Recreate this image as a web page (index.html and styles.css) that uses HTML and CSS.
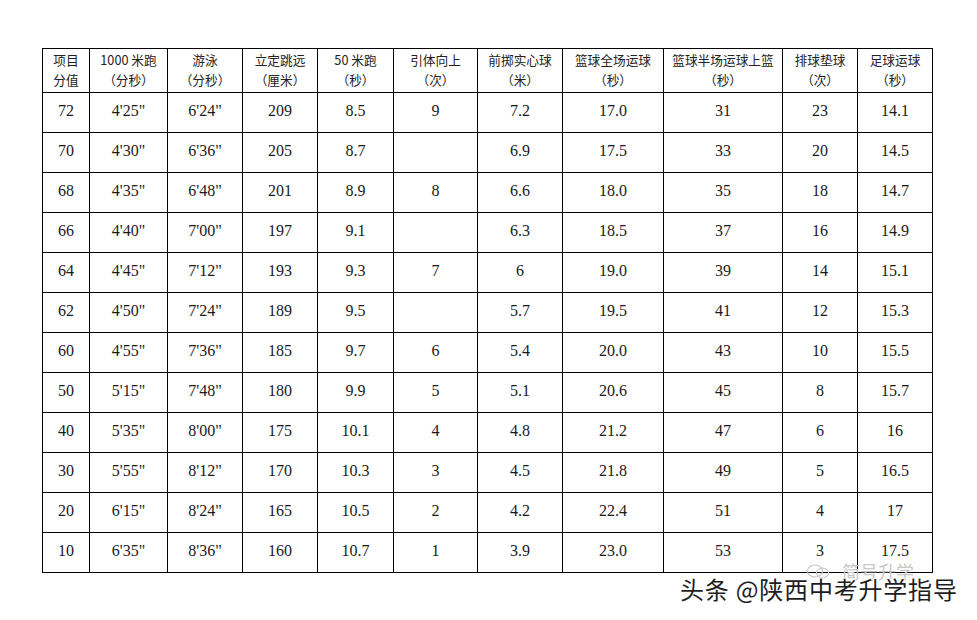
FILE: index.html
```html
<!DOCTYPE html>
<html lang="zh">
<head>
<meta charset="utf-8">
<link rel="stylesheet" href="styles.css">
</head>
<body>
<div class="page">
<table class="score">
<colgroup>
<col style="width:47px"><col style="width:78px"><col style="width:75px"><col style="width:75px"><col style="width:76px"><col style="width:84px"><col style="width:85px"><col style="width:101px"><col style="width:119px"><col style="width:75px"><col style="width:75px">
</colgroup>
<thead>
<tr>
<th>项目<br>分值</th>
<th>1000 米跑<br>（分秒）</th>
<th>游泳<br>（分秒）</th>
<th>立定跳远<br>（厘米）</th>
<th>50 米跑<br>（秒）</th>
<th>引体向上<br>（次）</th>
<th>前掷实心球<br>（米）</th>
<th>篮球全场运球<br>（秒）</th>
<th>篮球半场运球上篮<br>（秒）</th>
<th>排球垫球<br>（次）</th>
<th>足球运球<br>（秒）</th>
</tr>
</thead>
<tbody>
<tr><td>72</td><td>4'25"</td><td>6'24"</td><td>209</td><td>8.5</td><td>9</td><td>7.2</td><td>17.0</td><td>31</td><td>23</td><td>14.1</td></tr>
<tr><td>70</td><td>4'30"</td><td>6'36"</td><td>205</td><td>8.7</td><td></td><td>6.9</td><td>17.5</td><td>33</td><td>20</td><td>14.5</td></tr>
<tr><td>68</td><td>4'35"</td><td>6'48"</td><td>201</td><td>8.9</td><td>8</td><td>6.6</td><td>18.0</td><td>35</td><td>18</td><td>14.7</td></tr>
<tr><td>66</td><td>4'40"</td><td>7'00"</td><td>197</td><td>9.1</td><td></td><td>6.3</td><td>18.5</td><td>37</td><td>16</td><td>14.9</td></tr>
<tr><td>64</td><td>4'45"</td><td>7'12"</td><td>193</td><td>9.3</td><td>7</td><td>6</td><td>19.0</td><td>39</td><td>14</td><td>15.1</td></tr>
<tr><td>62</td><td>4'50"</td><td>7'24"</td><td>189</td><td>9.5</td><td></td><td>5.7</td><td>19.5</td><td>41</td><td>12</td><td>15.3</td></tr>
<tr><td>60</td><td>4'55"</td><td>7'36"</td><td>185</td><td>9.7</td><td>6</td><td>5.4</td><td>20.0</td><td>43</td><td>10</td><td>15.5</td></tr>
<tr><td>50</td><td>5'15"</td><td>7'48"</td><td>180</td><td>9.9</td><td>5</td><td>5.1</td><td>20.6</td><td>45</td><td>8</td><td>15.7</td></tr>
<tr><td>40</td><td>5'35"</td><td>8'00"</td><td>175</td><td>10.1</td><td>4</td><td>4.8</td><td>21.2</td><td>47</td><td>6</td><td>16</td></tr>
<tr><td>30</td><td>5'55"</td><td>8'12"</td><td>170</td><td>10.3</td><td>3</td><td>4.5</td><td>21.8</td><td>49</td><td>5</td><td>16.5</td></tr>
<tr><td>20</td><td>6'15"</td><td>8'24"</td><td>165</td><td>10.5</td><td>2</td><td>4.2</td><td>22.4</td><td>51</td><td>4</td><td>17</td></tr>
<tr><td>10</td><td>6'35"</td><td>8'36"</td><td>160</td><td>10.7</td><td>1</td><td>3.9</td><td>23.0</td><td>53</td><td>3</td><td>17.5</td></tr>
</tbody>
</table>
<div class="faint">
<svg class="faint-icon" width="24" height="16" viewBox="0 0 24 16"><ellipse cx="9" cy="8" rx="7.5" ry="6" fill="none" stroke="#c8c8c8" stroke-width="1.2"/><ellipse cx="16.5" cy="10" rx="6" ry="4.8" fill="none" stroke="#c8c8c8" stroke-width="1.2"/></svg>
<span>简号升学</span>
</div>
<div class="mark">头条 @陕西中考升学指导</div>
</div>
</body>
</html>
```
FILE: styles.css
```css
html, body {
  margin: 0;
  padding: 0;
  background: #ffffff;
}
.page {
  position: relative;
  width: 977px;
  height: 620px;
  padding: 48px 0 0 42px;
  box-sizing: border-box;
}
.score {
  border-collapse: collapse;
  table-layout: fixed;
  width: 891px;
  color: #1a1a1a;
}
.score th, .score td {
  border: 1px solid #000;
  padding: 0;
  text-align: center;
}
.score th {
  height: 42px;
  padding-bottom: 1px;
  font-family: "Noto Sans CJK SC", "Liberation Sans", sans-serif;
  font-weight: 400;
  font-size: 12.7px;
  line-height: 20px;
  color: #222;
  white-space: nowrap;
}
.score td {
  height: 40px;
  box-sizing: border-box;
  font-family: "Liberation Serif", "Times New Roman", serif;
  font-size: 16px;
  line-height: 20px;
  padding-bottom: 4px;
}
.faint {
  position: absolute;
  left: 806px;
  top: 562px;
  display: flex;
  align-items: center;
  gap: 12px;
  font-family: "Noto Sans CJK SC", sans-serif;
  font-size: 18px;
  color: #c8c8c8;
  line-height: 18px;
}
.mark {
  position: absolute;
  left: 680px;
  top: 573px;
  font-family: "Noto Sans CJK SC", sans-serif;
  font-size: 24px;
  line-height: 32px;
  color: #1e1e1e;
  letter-spacing: 0.8px;
  text-shadow: 0 0 2px #fff, 1px 1px 0 #fff, -1px -1px 0 #fff, 1px -1px 0 #fff, -1px 1px 0 #fff;
}
```
